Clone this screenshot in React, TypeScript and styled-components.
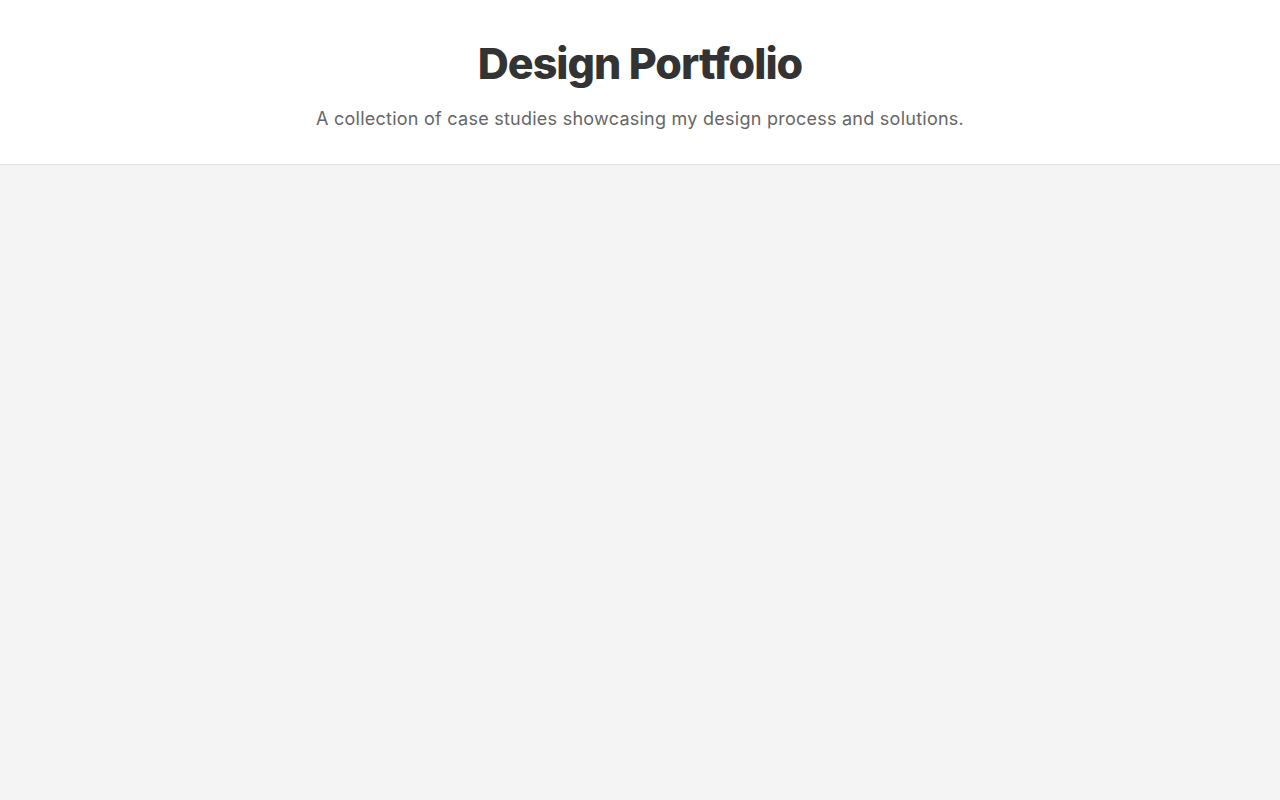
import React from 'react';
import styled, { createGlobalStyle } from 'styled-components';

const GlobalStyle = createGlobalStyle`
  html, body {
    margin: 0;
    padding: 0;
    height: 100%;
  }
  body {
    background: #f4f4f4;
    font-family: Inter, 'Noto Sans', sans-serif;
    color: #333;
  }
  #root {
    min-height: 100vh;
  }
`;

const Page = styled.div`
  min-height: 100vh;
  background: #f4f4f4;
`;

const Header = styled.header`
  background: #fff;
  border-bottom: 1px solid #e2e2e2;
  padding: 38px 20px 32px;
  text-align: center;
`;

const Title = styled.h1`
  margin: 0;
  font-size: 43px;
  font-weight: 800;
  line-height: 1.2;
  color: #333;
  letter-spacing: -1px;
`;

const Subtitle = styled.p`
  margin: 15px 0 0;
  font-size: 18px;
  line-height: 1.5;
  color: #666;
  letter-spacing: 0.25px;
`;

export default function App() {
  return (
    <Page>
      <GlobalStyle />
      <Header>
        <Title>Design Portfolio</Title>
        <Subtitle>A collection of case studies showcasing my design process and solutions.</Subtitle>
      </Header>
    </Page>
  );
}
